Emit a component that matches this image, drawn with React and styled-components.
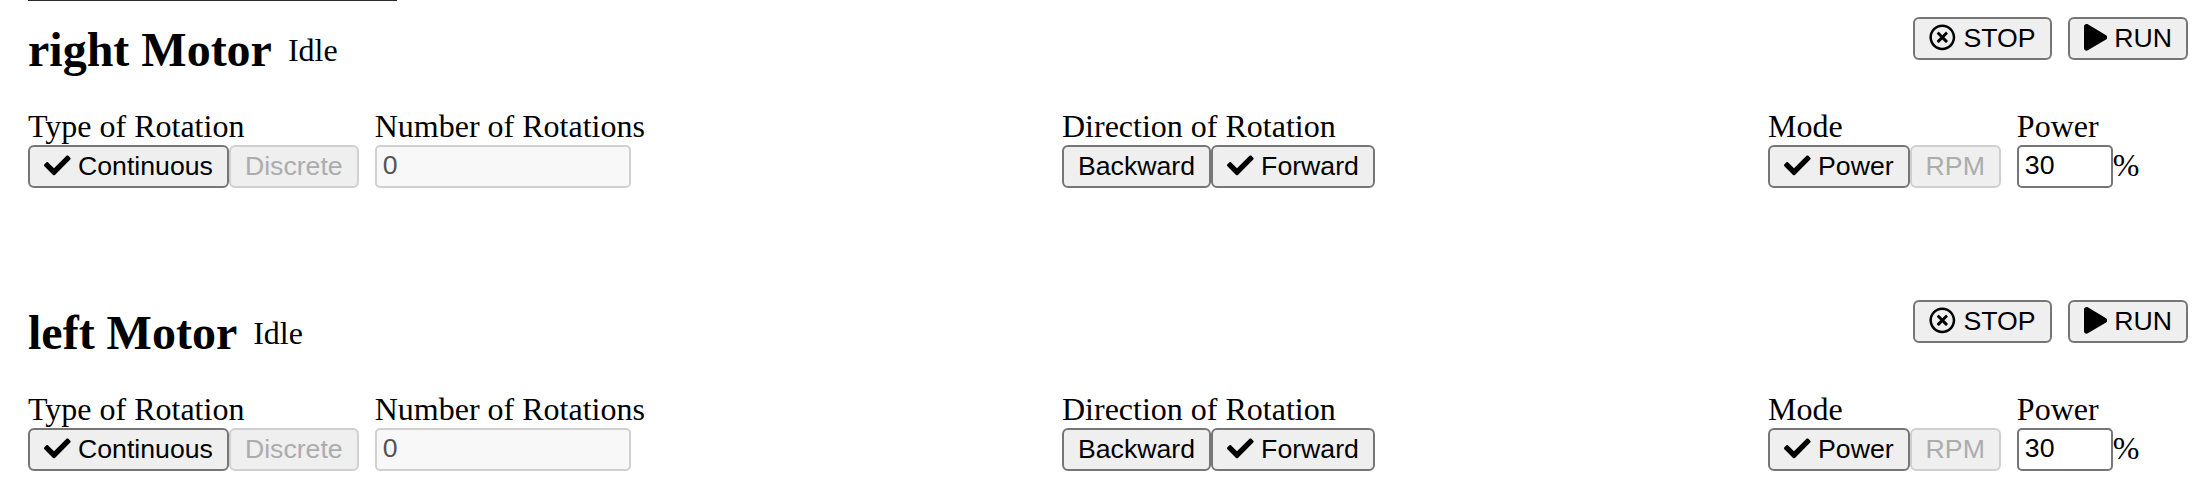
import React from "react";
import styled, { createGlobalStyle } from "styled-components";
import { FaCheck, FaPlay, FaRegTimesCircle } from "react-icons/fa";

const GlobalStyle = createGlobalStyle`
  body {
    margin: 0;
    background: #fff;
    color: #000;
    font: 32px/37px "Liberation Serif", "Times New Roman", serif;
  }
  * { box-sizing: border-box; }
`;

const Page = styled.main`
  height: 492px;
  padding: 0 18px 0 28px;
  overflow: hidden;
`;

const Divider = styled.hr`
  width: 369px;
  height: 1px;
  margin: 0;
  border: 0;
  background: #2b2b2b;
`;

const MotorPanel = styled.section`
  padding-top: 16px;

  & + & {
    margin-top: 96px;
  }
`;

const Header = styled.header`
  display: flex;
  justify-content: space-between;
  align-items: flex-start;
  height: 91px;
`;

const TitleGroup = styled.div`
  display: flex;
  align-items: flex-start;
  gap: 16px;
  padding-top: 5px;
`;

const Title = styled.h2`
  margin: 0;
  font-size: 48px;
  line-height: 55px;
`;

const Status = styled.span`
  margin-top: 10px;
`;

const Row = styled.div`
  display: flex;
  gap: 16px;
`;

const Controls = styled.div`
  display: grid;
  grid-template-columns: 1034px 706px 1fr;
`;

const Field = styled.div`
  display: flex;
  flex-direction: column;
  white-space: nowrap;
`;

const FieldBody = styled.div`
  display: flex;
  align-items: flex-start;
`;

const Unit = styled.span`
  padding-top: 2px;
`;

const Button = styled.button`
  display: flex;
  align-items: center;
  height: 43px;
  padding: 0 14px 2px;
  border: 2px solid #767676;
  border-radius: 6px;
  background: #efefef;
  color: #000;
  font: 26.667px/30px "Liberation Sans", Arial, sans-serif;
  white-space: pre;

  svg {
    flex: none;
    margin-right: 7.4px;
  }

  &:disabled {
    border-color: #d0d0d0;
    color: #acacac;
  }
`;

const PlayIcon = styled(FaPlay)`
  width: 0.875em;
`;

const Input = styled.input`
  width: ${(p) => p.$width}px;
  height: 43px;
  margin: 0;
  padding: 0 6px 2px;
  border: 2px solid #767676;
  border-radius: 5px;
  background: #fff;
  color: #000;
  font: 26.667px/30px "Liberation Sans", Arial, sans-serif;

  &:disabled {
    border-color: #d0d0d0;
    background: #f8f8f8;
    color: #545454;
  }
`;

function Motor({ name }) {
  return (
    <MotorPanel>
      <Header>
        <TitleGroup>
          <Title>{name} Motor</Title>
          <Status>Idle</Status>
        </TitleGroup>
        <Row>
          <Button><FaRegTimesCircle />STOP</Button>
          <Button><PlayIcon />RUN</Button>
        </Row>
      </Header>
      <Controls>
        <Row>
          <Field>
            <span>Type of Rotation</span>
            <FieldBody>
              <Button><FaCheck />Continuous</Button>
              <Button disabled>Discrete</Button>
            </FieldBody>
          </Field>
          <Field>
            <span>Number of Rotations</span>
            <Input $width={256} defaultValue="0" disabled />
          </Field>
        </Row>
        <Field>
          <span>Direction of Rotation</span>
          <FieldBody>
            <Button>Backward</Button>
            <Button><FaCheck />Forward</Button>
          </FieldBody>
        </Field>
        <Row>
          <Field>
            <span>Mode</span>
            <FieldBody>
              <Button><FaCheck />Power</Button>
              <Button disabled>RPM</Button>
            </FieldBody>
          </Field>
          <Field>
            <span>Power</span>
            <FieldBody>
              <Input $width={96} defaultValue="30" />
              <Unit>%</Unit>
            </FieldBody>
          </Field>
        </Row>
      </Controls>
    </MotorPanel>
  );
}

export default function App() {
  return (
    <>
      <GlobalStyle />
      <Page>
        <Divider />
        <Motor name="right" />
        <Motor name="left" />
      </Page>
    </>
  );
}
